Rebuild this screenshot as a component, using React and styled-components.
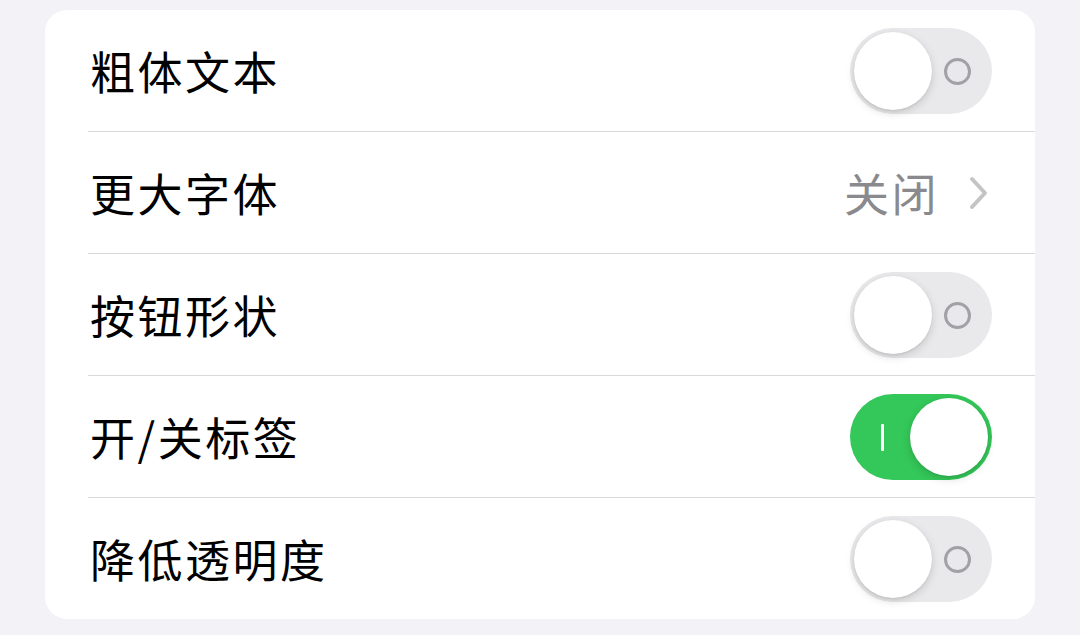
import React from 'react';
import styled, { createGlobalStyle } from 'styled-components';

const GlobalStyle = createGlobalStyle`
  html, body {
    margin: 0;
    padding: 0;
    background: #f2f2f7;
    font-family: "Noto Sans CJK SC", "Noto Sans", sans-serif;
  }
`;

const ROWS = [
  { label: '粗体文本', type: 'toggle', on: false },
  { label: '更大字体', type: 'link', value: '关闭' },
  { label: '按钮形状', type: 'toggle', on: false },
  { label: '开/关标签', type: 'toggle', on: true },
  { label: '降低透明度', type: 'toggle', on: false },
];

const App = () => (
  <Page>
    <GlobalStyle />
    <Card>
      {ROWS.map((r, i) => (
        <Row key={r.label}>
          <RowInner last={i === ROWS.length - 1}>
            <Label>{r.label}</Label>
            {r.type === 'toggle' ? (
              <Switch on={r.on}>
                {r.on ? <OnMark /> : <OffMark />}
                <Knob on={r.on} />
              </Switch>
            ) : (
              <Detail>
                <Value>{r.value}</Value>
                <svg width="20" height="34" viewBox="0 0 20 34">
                  <path d="M3 3 L16 17 L3 31" fill="none" stroke="#c4c4c7" strokeWidth="4" strokeLinecap="round" strokeLinejoin="round" />
                </svg>
              </Detail>
            )}
          </RowInner>
        </Row>
      ))}
    </Card>
  </Page>
);

export default App;

const Page = styled.div`
  width: 1080px;
  height: 635px;
  box-sizing: border-box;
  padding: 10px 45px 0;
  overflow: hidden;
`;

const Card = styled.div`
  background: #fff;
  border-radius: 22px;
  overflow: hidden;
`;

const Row = styled.div`
  display: flex;
  padding-left: 43px;
`;

const RowInner = styled.div`
  flex: 1;
  display: flex;
  align-items: center;
  justify-content: space-between;
  padding-right: 43px;
  border-bottom: ${p => (p.last ? '0' : '1px solid #d9d9dc')};
  height: 121px;
`;

const Label = styled.div`
  padding-left: 2px;
  font-size: 45px;
  color: #000;
  letter-spacing: 2.5px;
`;

const Detail = styled.div`
  display: flex;
  align-items: center;
  gap: 30px;
  padding-right: 3px;
`;

const Value = styled.span`
  font-size: 45px;
  color: #8a8a8e;
  letter-spacing: 2.5px;
`;

const Switch = styled.div`
  position: relative;
  width: 142px;
  height: 86px;
  border-radius: 43px;
  background: ${p => (p.on ? '#34c759' : '#e9e9eb')};
  flex-shrink: 0;
`;

const Knob = styled.div`
  position: absolute;
  top: 4px;
  left: ${p => (p.on ? '60px' : '4px')};
  width: 78px;
  height: 78px;
  border-radius: 50%;
  background: #fff;
  box-shadow: 0 3px 8px rgba(0, 0, 0, 0.15), 0 1px 2px rgba(0, 0, 0, 0.08);
`;

const OffMark = styled.div`
  position: absolute;
  right: 21px;
  top: 30px;
  width: 27px;
  height: 27px;
  border-radius: 50%;
  border: 3px solid #a2a2a6;
  box-sizing: border-box;
`;

const OnMark = styled.div`
  position: absolute;
  left: 31px;
  top: 30px;
  width: 3px;
  height: 27px;
  border-radius: 1px;
  background: #fff;
`;
